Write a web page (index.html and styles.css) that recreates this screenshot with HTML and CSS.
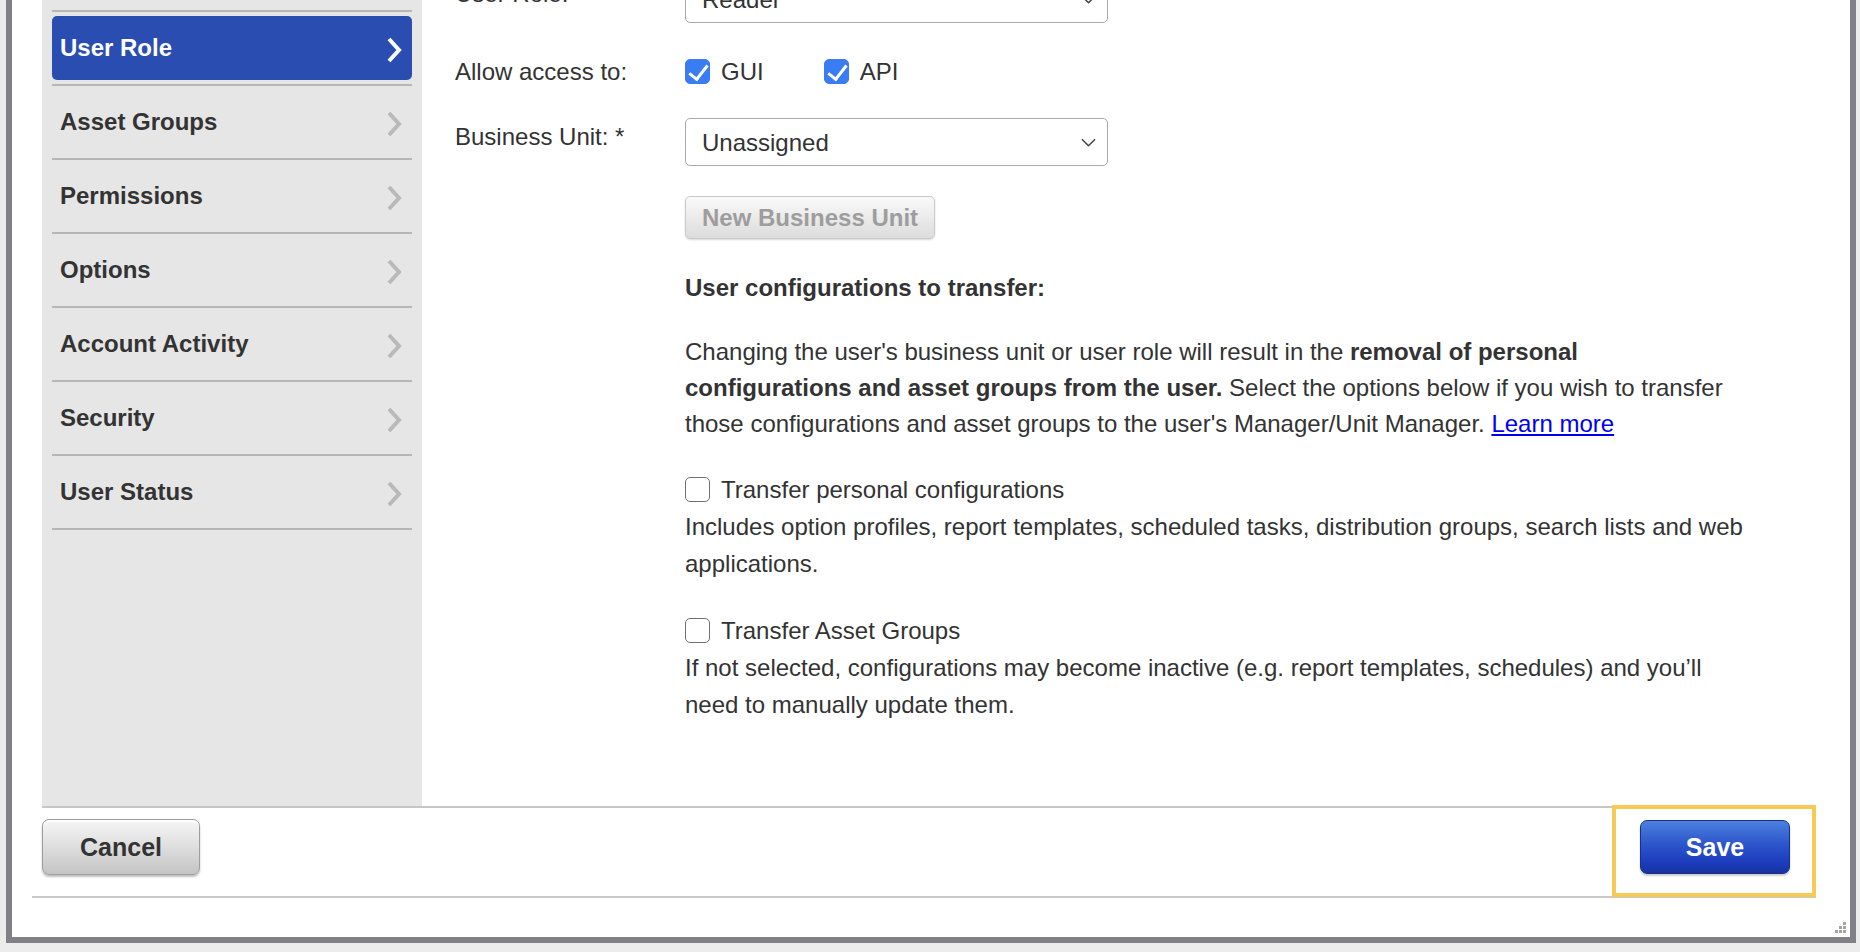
FILE: index.html
```html
<!DOCTYPE html>
<html lang="en">

<head>
    <meta charset="UTF-8">
    <meta name="viewport" content="width=device-width, initial-scale=1.0">
    <title>Edit User</title>
    <link rel="stylesheet" href="styles.css">
</head>

<body>
    <div class="dialog">
        <div class="dialog-body">
            <!-- left navigation -->
            <nav class="side-nav">
                <ul class="nav-list">
                    <li><a class="nav-item active" href="#">User Role
                        <svg class="chev" viewBox="0 0 16 28"><polyline points="3,3 13,14 3,25" /></svg></a></li>
                    <li><a class="nav-item" href="#">Asset Groups
                        <svg class="chev" viewBox="0 0 16 28"><polyline points="3,3 13,14 3,25" /></svg></a></li>
                    <li><a class="nav-item" href="#">Permissions
                        <svg class="chev" viewBox="0 0 16 28"><polyline points="3,3 13,14 3,25" /></svg></a></li>
                    <li><a class="nav-item" href="#">Options
                        <svg class="chev" viewBox="0 0 16 28"><polyline points="3,3 13,14 3,25" /></svg></a></li>
                    <li><a class="nav-item" href="#">Account Activity
                        <svg class="chev" viewBox="0 0 16 28"><polyline points="3,3 13,14 3,25" /></svg></a></li>
                    <li><a class="nav-item" href="#">Security
                        <svg class="chev" viewBox="0 0 16 28"><polyline points="3,3 13,14 3,25" /></svg></a></li>
                    <li><a class="nav-item" href="#">User Status
                        <svg class="chev" viewBox="0 0 16 28"><polyline points="3,3 13,14 3,25" /></svg></a></li>
                </ul>
            </nav>

            <!-- form -->
            <div class="main-pane">
                <div class="form-row first-row">
                    <label class="field-label" for="role-select">User Role:</label>
                    <div class="select-wrap">
                        <select id="role-select" class="select-box">
                            <option>Reader</option>
                        </select>
                        <svg class="select-arrow" viewBox="0 0 16 9"><polyline points="1,1 8,8 15,1" /></svg>
                    </div>
                </div>

                <div class="form-row access-row">
                    <span class="field-label">Allow access to:</span>
                    <div class="check-group">
                        <label class="check"><input type="checkbox" checked> GUI</label>
                        <label class="check"><input type="checkbox" checked> API</label>
                    </div>
                </div>

                <div class="form-row unit-row">
                    <label class="field-label" for="unit-select">Business Unit: *</label>
                    <div class="select-wrap">
                        <select id="unit-select" class="select-box">
                            <option>Unassigned</option>
                        </select>
                        <svg class="select-arrow" viewBox="0 0 16 9"><polyline points="1,1 8,8 15,1" /></svg>
                    </div>
                </div>

                <div class="button-row">
                    <button class="btn-disabled" disabled>New Business Unit</button>
                </div>

                <div class="transfer">
                    <h4>User configurations to transfer:</h4>
                    <p class="transfer-text">Changing the user's business unit or user role will result in the <b>removal of personal configurations and asset groups from the user.</b> Select the options below if you wish to transfer those configurations and asset groups to the user's Manager/Unit Manager. <a href="#">Learn more</a></p>

                    <div class="option">
                        <label class="check"><input type="checkbox"> Transfer personal configurations</label>
                        <p class="option-desc">Includes option profiles, report templates, scheduled tasks, distribution groups, search lists and web applications.</p>
                    </div>

                    <div class="option second">
                        <label class="check"><input type="checkbox"> Transfer Asset Groups</label>
                        <p class="option-desc">If not selected, configurations may become inactive (e.g. report templates, schedules) and you’ll need to manually update them.</p>
                    </div>
                </div>
            </div>
        </div>

        <div class="dialog-footer">
            <button class="btn btn-cancel">Cancel</button>
            <button class="btn btn-save">Save</button>
            <div class="save-highlight"></div>
        </div>
        <div class="dialog-bottom"></div>

        <svg class="grip" viewBox="0 0 12 12">
            <rect x="8" y="0" width="3" height="3" />
            <rect x="4" y="4" width="3" height="3" />
            <rect x="8" y="4" width="3" height="3" />
            <rect x="0" y="8" width="3" height="3" />
            <rect x="4" y="8" width="3" height="3" />
            <rect x="8" y="8" width="3" height="3" />
        </svg>
    </div>
</body>

</html>
```

FILE: styles.css
```css
:root {
    --text-color: #333;
    --nav-bg: #e6e6e6;
    --nav-line: #b6b6b6;
    --active-blue: #2a4db1;
    --frame: #808086;
    --line: #c6c6c6;
}

* {
    box-sizing: border-box;
}

body {
    margin: 0;
    background-color: #ececec;
    font-family: "Liberation Sans", Arial, Helvetica, sans-serif;
    font-size: 24px;
    color: var(--text-color);
    overflow: hidden;
}

/* dialog frame */
.dialog {
    position: relative;
    margin-left: 6px;
    width: 1850px;
    height: 943px;
    background-color: #fff;
    border: 6px solid var(--frame);
    border-top: 0;
}

.dialog-body {
    display: flex;
    height: 806px;
}

/* left navigation */
.side-nav {
    width: 380px;
    flex: none;
    margin-left: 30px;
    padding: 10px 10px 0;
    background-color: var(--nav-bg);
}

.nav-list {
    list-style: none;
    margin: 0;
    padding: 0;
    border-top: 2px solid var(--nav-line);
}

.nav-list li {
    padding: 4px 0;
    border-bottom: 2px solid var(--nav-line);
}

.nav-item {
    display: flex;
    align-items: center;
    justify-content: space-between;
    height: 64px;
    padding: 0 10px 0 8px;
    border-radius: 5px;
    font-weight: bold;
    color: var(--text-color);
    text-decoration: none;
}

.nav-item.active {
    background-color: var(--active-blue);
    color: #fff;
}

.chev {
    width: 16px;
    height: 28px;
    margin-top: 3px;
    fill: none;
    stroke: #b9b9b9;
    stroke-width: 4;
}

.nav-item.active .chev {
    stroke: #fff;
}

/* form */
.main-pane {
    flex-grow: 1;
    padding-left: 33px;
    overflow: hidden;
}

.form-row {
    display: flex;
    align-items: flex-start;
}

.field-label {
    width: 230px;
    flex: none;
    line-height: 36px;
    padding-top: 1px;
}

.first-row {
    margin-top: -25px;
}

.access-row {
    margin-top: 36px;
    height: 25px;
    align-items: center;
}

.unit-row {
    margin-top: 34px;
}

.select-wrap {
    position: relative;
    width: 423px;
}

.select-box {
    width: 100%;
    height: 48px;
    padding: 0 40px 0 16px;
    border: 1.5px solid #a9a9a9;
    border-radius: 5px;
    background-color: #fff;
    font: inherit;
    color: var(--text-color);
    appearance: none;
    -webkit-appearance: none;
}

.select-arrow {
    position: absolute;
    right: 12px;
    top: 20px;
    width: 15px;
    height: 9px;
    fill: none;
    stroke: #444;
    stroke-width: 1.6;
}

.check-group {
    display: flex;
    gap: 60px;
}

.check {
    display: flex;
    align-items: center;
    gap: 11px;
    line-height: 37px;
}

.check input {
    appearance: none;
    -webkit-appearance: none;
    position: relative;
    width: 25px;
    height: 25px;
    margin: 0;
    border: 1.5px solid #707070;
    border-radius: 5px;
    background-color: #fff;
}

.check input:checked {
    background-color: #3a7cf3;
    border-color: #3a7cf3;
}

.check input:checked::after {
    content: "";
    position: absolute;
    left: 7px;
    top: 1px;
    width: 8px;
    height: 16px;
    border: solid #fff;
    border-width: 0 3.5px 3.5px 0;
    transform: rotate(38deg);
}

.button-row {
    margin-top: 30px;
    padding-left: 230px;
}

.btn-disabled {
    height: 43px;
    padding: 0 16px;
    border: 1px solid #c9c9c9;
    border-radius: 5px;
    background: linear-gradient(#fafafa, #dcdcdc);
    box-shadow: 0 1px 2px rgba(0, 0, 0, 0.15);
    font: inherit;
    font-weight: bold;
    color: #9d9d9d;
}

/* transfer section */
.transfer {
    margin-left: 230px;
    width: 1060px;
}

.transfer h4 {
    margin: 31px 0 0;
    font-size: 24px;
    line-height: 36px;
}

.transfer-text {
    margin: 28px 0 0;
    line-height: 36px;
}

.transfer-text a {
    color: #0000ee;
}

.option {
    margin-top: 29px;
}

.option.second {
    margin-top: 30px;
}

.option-desc {
    margin: 0;
    line-height: 37px;
}

/* footer */
.dialog-footer {
    position: relative;
    display: flex;
    align-items: flex-start;
    justify-content: space-between;
    height: 90px;
    margin: 0 34px 0 30px;
    padding-top: 11px;
    border-top: 2px solid var(--line);
}

.btn {
    font: inherit;
    font-size: 25px;
    font-weight: bold;
    border-radius: 7px;
}

.btn-cancel {
    width: 158px;
    height: 56px;
    border: 1px solid #9d9d9d;
    background: linear-gradient(#f6f6f6, #dedede 50%, #c4c4c4);
    box-shadow: inset 0 2px 0 #fff, 0 2px 2px rgba(0, 0, 0, 0.25);
    color: var(--text-color);
}

.btn-save {
    width: 150px;
    height: 54px;
    margin-top: 1px;
    margin-right: 26px;
    border: 1px solid #17308f;
    background: linear-gradient(#4b80de, #2d55cc 45%, #1c3cbd 80%, #18339f);
    box-shadow: 0 2px 2px rgba(0, 0, 0, 0.2);
    color: #fff;
}

/* yellow highlight round the save button */
.save-highlight {
    position: absolute;
    right: 0;
    top: -3px;
    width: 204px;
    height: 92px;
    border: 4px solid #f7c955;
}

.dialog-bottom {
    margin: 0 34px 0 20px;
    height: 41px;
    border-top: 2px solid #c8c8c8;
}

.grip {
    position: absolute;
    right: 3px;
    bottom: 3px;
    width: 12px;
    height: 12px;
    fill: #a5a5a5;
}
```
